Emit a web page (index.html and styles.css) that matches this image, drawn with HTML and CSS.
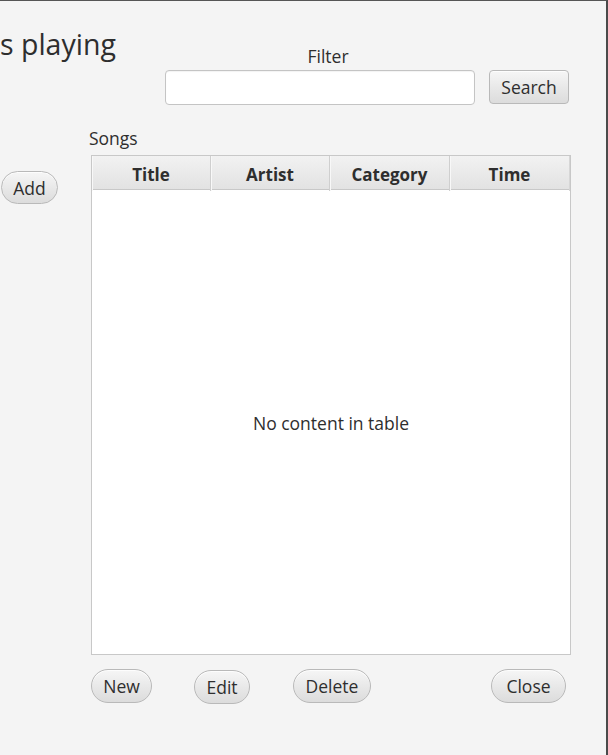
FILE: index.html
```html
<!DOCTYPE html>
<html>
<head>
<meta charset="utf-8">
<link rel="stylesheet" href="styles.css">
</head>
<body>
<div class="window">
  <div class="top">
    <div class="title">s playing</div>
    <div class="filter">
      <div class="filter-label">Filter</div>
      <div class="spacer"></div>
      <div class="textfield"></div>
      <button class="btn btn-rect">Search</button>
    </div>
  </div>
  <div class="body">
    <div class="left">
      <button class="btn btn-pill btn-add">Add</button>
    </div>
    <div class="right">
      <div class="songs-label">Songs</div>
      <div class="table">
        <div class="thead">
          <div class="th">Title</div>
          <div class="th">Artist</div>
          <div class="th">Category</div>
          <div class="th">Time</div>
        </div>
        <div class="tbody">No content in table</div>
      </div>
      <div class="actions">
        <button class="btn btn-pill btn-new">New</button>
        <button class="btn btn-pill btn-edit">Edit</button>
        <button class="btn btn-pill btn-delete">Delete</button>
        <button class="btn btn-pill btn-close">Close</button>
      </div>
    </div>
  </div>
</div>
</body>
</html>
```
FILE: styles.css
```css
* { box-sizing: border-box; }
html, body { margin: 0; padding: 0; }
body {
  font-family: "Open Sans", "Noto Sans", sans-serif;
  color: #2e2e2e;
  background: #f4f4f4;
}
.window {
  width: 608px;
  height: 755px;
  border-top: 1px solid #555;
  border-right: 2px solid #4a4a4a;
  background: #f4f4f4;
  display: flex;
  flex-direction: column;
  overflow: hidden;
}
.top {
  display: flex;
  align-items: flex-start;
  height: 109px;
}
.title {
  width: 165px;
  margin-top: 26px;
  font-size: 28.5px;
  line-height: 34px;
  white-space: nowrap;
}
.filter {
  margin-top: 45px;
  margin-left: 0;
  display: grid;
  grid-template-columns: 310px 80px;
  column-gap: 14px;
  row-gap: 4px;
}
.title + .filter { margin-top: 45px; }
.filter-label {
  text-align: center;
  padding-left: 16px;
  font-size: 17.5px;
  line-height: 20px;
}
.textfield {
  height: 35px;
  background: #fff;
  border: 1px solid #c4c4c4;
  border-radius: 4px;
  box-shadow: inset 0 1px 1px rgba(0,0,0,0.05);
}
.btn {
  font-family: inherit;
  font-size: 17.5px;
  color: #2e2e2e;
  border: 1px solid #b9b9b9;
  background: linear-gradient(to bottom, #f6f6f6 0%, #e6e6e6 60%, #dcdcdc 100%);
  box-shadow: inset 0 1px 0 #fdfdfd;
  padding: 0;
  margin: 0;
  height: 34px;
  line-height: 32px;
  cursor: default;
}
.btn-rect {
  border-radius: 4px;
  width: 80px;
}
.btn-pill {
  border-radius: 17px;
  height: 34px;
}
.body {
  display: flex;
  flex: 1;
}
.left {
  width: 91px;
  flex: none;
}
.btn-add {
  margin-top: 61px;
  margin-left: 1px;
  width: 57px;
  height: 33px;
}
.right {
  width: 480px;
  display: flex;
  flex-direction: column;
}
.songs-label {
  margin-top: 18px;
  margin-left: -2px;
  font-size: 17.5px;
  line-height: 20px;
  height: 27px;
}
.table {
  height: 500px;
  width: 480px;
  border: 1px solid #c8c8c8;
  background: #fff;
  display: flex;
  flex-direction: column;
}
.thead {
  display: grid;
  grid-template-columns: 119px 119px 120px 1fr;
  height: 34px;
  border-bottom: 1px solid #c8c8c8;
  background: linear-gradient(to bottom, #f2f2f2, #e2e2e2);
}
.th {
  font-weight: bold;
  font-size: 17px;
  text-align: center;
  line-height: 33px;
  padding-top: 2px;
  border-right: 1px solid #cfcfcf;
  box-shadow: inset 1px 0 0 #f8f8f8;
}
.th:last-child { border-right: 1px solid #d6d6d6; }
.tbody {
  flex: 1;
  display: flex;
  align-items: center;
  justify-content: center;
  font-size: 17.5px;
  padding-top: 1px;
}
.actions {
  display: flex;
  align-items: flex-start;
  margin-top: 14px;
}
.btn-new { width: 61px; }
.btn-edit { width: 56px; margin-left: 42px; margin-top: 1px; }
.btn-delete { width: 78px; margin-left: 43px; }
.btn-close { width: 75px; margin-left: 120px; }
```
